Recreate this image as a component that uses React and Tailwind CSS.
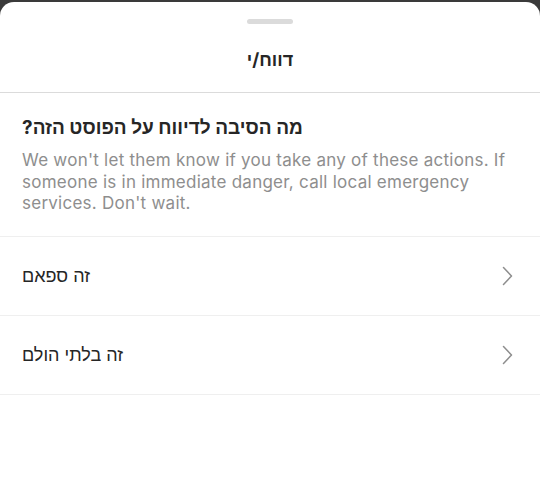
const REASONS = ['זה ספאם', 'זה בלתי הולם']

function Chevron() {
  return (
    <svg width="11" height="20" viewBox="0 0 11 20" fill="none" className="text-[#8e8e8e]">
      <polyline points="1.5,1.5 9.5,10 1.5,18.5" stroke="currentColor" strokeWidth="1.5" strokeLinecap="round" strokeLinejoin="round" />
    </svg>
  )
}

export default function App() {
  return (
    <div className="h-[480px] w-[540px] overflow-hidden bg-[#3a3a3a] pt-[2px] font-['Inter','Liberation_Sans',sans-serif]">
      <div className="h-full rounded-t-[14px] bg-white">
        <div className="flex justify-center pt-[17px]">
          <div className="h-[5px] w-[46px] rounded-full bg-[#dbdbdb]" />
        </div>
        <div className="flex h-[69px] items-center justify-center border-b border-[#dbdbdb] pt-[3px]">
          <h1 dir="rtl" className="text-[18px] font-bold text-[#262626]">
            דווח/י
          </h1>
        </div>
        <div className="border-b border-[#efefef] px-[22px] pb-[21px] pt-[23px]">
          <h2 dir="rtl" className="text-left text-[19px] font-bold leading-[24px] text-[#262626]">
            מה הסיבה לדיווח על הפוסט הזה?
          </h2>
          <p className="mt-[10px] text-[17px] leading-[21.5px] tracking-[0.25px] text-[#8e8e8e]">
            We won't let them know if you take any of these actions. If someone is in immediate danger, call local emergency services. Don't wait.
          </p>
        </div>
        {REASONS.map((r) => (
          <div key={r} className="flex h-[79px] items-center justify-between border-b border-[#efefef] pl-[22px] pr-[27px]">
            <span dir="rtl" className="text-[18px] text-[#262626]">
              {r}
            </span>
            <Chevron />
          </div>
        ))}
      </div>
    </div>
  )
}
